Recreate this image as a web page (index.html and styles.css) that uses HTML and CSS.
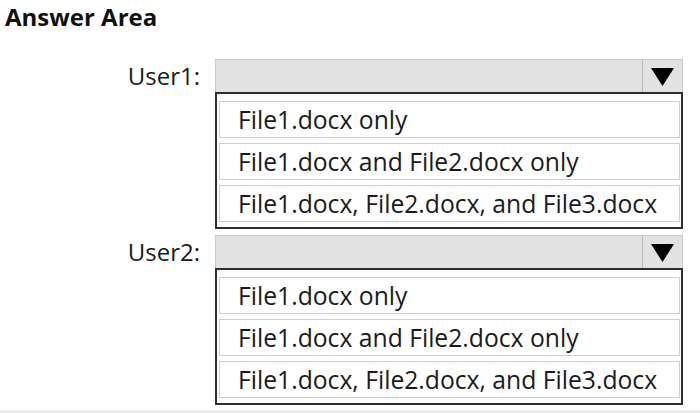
FILE: index.html
```html
<!DOCTYPE html>
<html lang="en">
<head>
<meta charset="UTF-8">
<meta name="viewport" content="width=device-width, initial-scale=1.0">
<title>Answer Area</title>
<link rel="stylesheet" href="styles.css">
</head>
<body class="page">

<h1 class="title">Answer Area</h1>

<div class="answers">
    <div class="answer-row">
        <span class="user-label">User1:</span>
        <div class="picker">
            <div class="picker-select">
                <span class="picker-arrow">
                    <svg width="23" height="18" viewBox="0 0 23 18"><polygon points="0,0 23,0 11.5,18" fill="#000"/></svg>
                </span>
            </div>
            <ul class="picker-list">
                <li class="picker-option">File1.docx only</li>
                <li class="picker-option">File1.docx and File2.docx only</li>
                <li class="picker-option">File1.docx, File2.docx, and File3.docx</li>
            </ul>
        </div>
    </div>
    <div class="answer-row">
        <span class="user-label">User2:</span>
        <div class="picker">
            <div class="picker-select">
                <span class="picker-arrow">
                    <svg width="23" height="18" viewBox="0 0 23 18"><polygon points="0,0 23,0 11.5,18" fill="#000"/></svg>
                </span>
            </div>
            <ul class="picker-list">
                <li class="picker-option">File1.docx only</li>
                <li class="picker-option">File1.docx and File2.docx only</li>
                <li class="picker-option">File1.docx, File2.docx, and File3.docx</li>
            </ul>
        </div>
    </div>
</div>

<div class="bottom-edge"></div>

</body>
</html>
```

FILE: styles.css
```css
.page {
    margin: 0;
    padding: 0;
    width: 700px;
    height: 413px;
    overflow: hidden;
    background-color: #fff;
    font-family: "Open Sans", "Noto Sans", sans-serif;
    color: #1a1a1a;
    display: flex;
    flex-direction: column;
}

.title {
    margin: 0;
    padding: 0 0 0 5px;
    height: 59px;
    font-size: 24px;
    line-height: 33px;
    font-weight: 700;
    color: #111;
}

.answers {
    display: flex;
    flex-direction: column;
    gap: 6px;
}

.answer-row {
    display: flex;
    align-items: flex-start;
}

.user-label {
    width: 200px;
    margin-right: 15px;
    text-align: right;
    font-size: 24px;
    line-height: 33px;
}

.picker {
    width: 468px;
}

.picker-select {
    height: 32px;
    display: flex;
    justify-content: flex-end;
    background-color: #e2e2e2;
    border: 1px solid #cacaca;
    border-bottom: none;
}

.picker-arrow {
    width: 40px;
    display: flex;
    justify-content: center;
    padding-top: 8px;
    border-left: 1px solid #b8b8b8;
    box-sizing: border-box;
}

.picker-list {
    list-style: none;
    margin: 0;
    padding: 7px 1px 5px 2px;
    border: 2px solid #2e2e2e;
    display: flex;
    flex-direction: column;
    gap: 5px;
}

.picker-option {
    height: 35px;
    padding-left: 18px;
    border: 1px solid #cfcfcf;
    font-size: 24.7px;
    line-height: 35px;
    white-space: nowrap;
}

.bottom-edge {
    margin-top: auto;
    height: 3px;
    background-color: #eeeeee;
}
```
